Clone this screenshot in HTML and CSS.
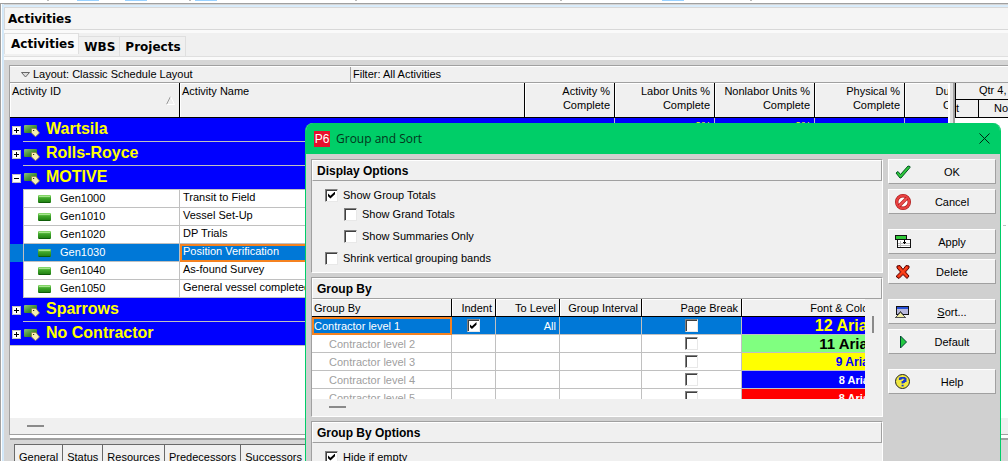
FILE: index.html
```html
<!DOCTYPE html>
<html lang="en">
<head>
<meta charset="utf-8">
<title>Activities - Group and Sort</title>
<link rel="stylesheet" href="styles.css">
</head>
<body>
<svg class="defs" aria-hidden="true">
  <defs>
    <linearGradient id="green" x1="0" y1="0" x2="0" y2="1">
      <stop offset="0" stop-color="#8fdc72"/><stop offset="0.4" stop-color="#3fa62a"/><stop offset="1" stop-color="#1c7a10"/>
    </linearGradient>
    <linearGradient id="moss" x1="0" y1="0" x2="1" y2="1">
      <stop offset="0" stop-color="#8cc47c"/><stop offset="0.5" stop-color="#4a9438"/><stop offset="1" stop-color="#1f5c14"/>
    </linearGradient>
    <symbol id="bar" viewBox="0 0 13 8"><rect width="13" height="8" rx="1" fill="url(#green)"/><path d="M1 1.500h11" stroke="#a5e58c"/><path d="M1 7.500h11" stroke="#0f5c08"/></symbol>
    <symbol id="band" viewBox="0 0 16 12"><rect width="13" height="8" rx="1" fill="url(#moss)"/><path d="M7.500 3.500H12L15.500 8 11.500 11.700 7.500 8z" fill="#f5eeb0" stroke="#8c8448" stroke-width=".8"/><path d="M9 5.500h1.200" stroke="#332"/></symbol>
  </defs>
</svg>
<div class="app">
  <div class="ribbon"><i class="tick t1"></i><i class="hot h1"></i><i class="hot h2"></i><i class="tick t2"></i><i class="hot h3"></i><i class="tick t3"></i><i class="tick t4"></i><i class="hot h4"></i><i class="tick t5"></i></div>
  <main class="frame">
    <h1 class="title">Activities</h1>
    <nav class="tabs"><button class="tab active">Activities</button><button class="tab">WBS</button><button class="tab">Projects</button></nav>
    <section class="workspace">
      <div class="layoutbar">
        <button class="layout"><svg width="9" height="6" viewBox="0 0 9 6"><path d="M.5.500h8L4.500 5z" fill="#ddd" stroke="#666"/></svg>Layout: Classic Schedule Layout</button>
        <div class="filter">Filter: All Activities</div>
      </div>
      <div class="split">
        <div class="gridwrap">
          <table class="grid">
            <colgroup><col class="c-id"><col class="c-name"><col class="c-90"><col class="c-100"><col class="c-100"><col class="c-90"><col class="c-90"></colgroup>
            <thead><tr>
              <th class="left"><div class="sortable">Activity ID<svg width="9" height="9" viewBox="0 0 9 9"><path d="M.5 8.500L4.500.5" stroke="#999" fill="none"/><path d="M4.500.5l4 8H.5" stroke="#fff" fill="none"/></svg></div></th>
              <th class="left">Activity Name</th><th>Activity %<br>Complete</th><th>Labor Units %<br>Complete</th><th>Nonlabor Units %<br>Complete</th><th>Physical %<br>Complete</th><th>Duration %<br>Complete</th>
            </tr></thead>
            <tbody>
              <tr class="group"><td colspan="3"><div class="band"><button class="exp" aria-label="Expand"></button><span><svg width="16" height="12"><use href="#band"/></svg>Wartsila</span></div></td><td class="pct">0%</td><td class="pct">0%</td><td></td><td></td></tr>
              <tr class="group"><td colspan="3"><div class="band"><button class="exp" aria-label="Expand"></button><span><svg width="16" height="12"><use href="#band"/></svg>Rolls-Royce</span></div></td><td></td><td></td><td></td><td></td></tr>
              <tr class="group"><td colspan="3"><div class="band"><button class="exp open" aria-label="Collapse"></button><span><svg width="16" height="12"><use href="#band"/></svg>MOTIVE</span></div></td><td></td><td></td><td></td><td></td></tr>
              <tr class="row"><td><div class="id"><svg width="13" height="8"><use href="#bar"/></svg>Gen1000</div></td><td>Transit to Field</td><td></td><td></td><td></td><td></td><td></td></tr>
              <tr class="row"><td><div class="id"><svg width="13" height="8"><use href="#bar"/></svg>Gen1010</div></td><td>Vessel Set-Up</td><td></td><td></td><td></td><td></td><td></td></tr>
              <tr class="row"><td><div class="id"><svg width="13" height="8"><use href="#bar"/></svg>Gen1020</div></td><td>DP Trials</td><td></td><td></td><td></td><td></td><td></td></tr>
              <tr class="row selected"><td><div class="id"><svg width="13" height="8"><use href="#bar"/></svg>Gen1030</div></td><td class="focus">Position Verification</td><td></td><td></td><td></td><td></td><td></td></tr>
              <tr class="row"><td><div class="id"><svg width="13" height="8"><use href="#bar"/></svg>Gen1040</div></td><td>As-found Survey</td><td></td><td></td><td></td><td></td><td></td></tr>
              <tr class="row"><td><div class="id"><svg width="13" height="8"><use href="#bar"/></svg>Gen1050</div></td><td>General vessel completed</td><td></td><td></td><td></td><td></td><td></td></tr>
              <tr class="group"><td colspan="3"><div class="band"><button class="exp" aria-label="Expand"></button><span><svg width="16" height="12"><use href="#band"/></svg>Sparrows</span></div></td><td></td><td></td><td></td><td></td></tr>
              <tr class="group last"><td colspan="3"><div class="band"><button class="exp" aria-label="Expand"></button><span><svg width="16" height="12"><use href="#band"/></svg>No Contractor</span></div></td><td></td><td></td><td></td><td></td></tr>
            </tbody>
          </table>
          <div class="hscroll"><i></i></div>
        </div>
        <div class="splitter"></div>
        <div class="gantt">
          <div class="quarter">Qtr 4,</div>
          <div class="months"><span>t</span><span>No</span></div>
          <div class="chart"></div>
          <div class="hscroll"></div>
        </div>
      </div>
    </section>
    <nav class="details"><button>General</button><button>Status</button><button>Resources</button><button>Predecessors</button><button>Successors</button></nav>
  </main>
</div>

<div class="dialog" role="dialog" aria-label="Group and Sort">
  <header class="caption"><span class="logo">P6</span><h2>Group and Sort</h2>
    <button class="close" aria-label="Close"><svg width="11" height="11" viewBox="0 0 11 11"><path d="M.5.5l10 10M10.500.5l-10 10" stroke="#021"/></svg></button>
  </header>
  <div class="content">
    <div class="panels">
      <section class="panel">
        <h3>Display Options</h3>
        <div class="checks">
          <label><input type="checkbox" checked>Show Group Totals</label>
          <label class="sub"><input type="checkbox">Show Grand Totals</label>
          <label class="sub spaced"><input type="checkbox">Show Summaries Only</label>
          <label class="spaced"><input type="checkbox">Shrink vertical grouping bands</label>
        </div>
      </section>
      <section class="panel">
        <h3>Group By</h3>
        <div class="levelbox">
          <div class="levelwrap">
            <table class="levels">
              <colgroup><col class="l-name"><col class="l-indent"><col class="l-to"><col class="l-int"><col class="l-page"><col class="l-font"></colgroup>
              <thead><tr><th class="left">Group By</th><th>Indent</th><th>To Level</th><th>Group Interval</th><th>Page Break</th><th>Font &amp; Color</th></tr></thead>
              <tbody>
                <tr class="selected"><td class="focus">Contractor level 1</td><td class="mid"><input type="checkbox" aria-label="Indent" checked></td><td class="right">All</td><td></td><td class="mid"><input type="checkbox" aria-label="Page break, level 1"></td><td class="font f1">12 Arial</td></tr>
                <tr><td class="off">Contractor level 2</td><td></td><td></td><td></td><td class="mid"><input type="checkbox" aria-label="Page break, level 2"></td><td class="font f2">11 Arial</td></tr>
                <tr><td class="off">Contractor level 3</td><td></td><td></td><td></td><td class="mid"><input type="checkbox" aria-label="Page break, level 3"></td><td class="font f3">9 Arial</td></tr>
                <tr><td class="off">Contractor level 4</td><td></td><td></td><td></td><td class="mid"><input type="checkbox" aria-label="Page break, level 4"></td><td class="font f4">8 Arial</td></tr>
                <tr><td class="off">Contractor level 5</td><td></td><td></td><td></td><td class="mid"><input type="checkbox" aria-label="Page break, level 5"></td><td class="font f5">8 Arial</td></tr>
              </tbody>
            </table>
          </div>
          <div class="vscroll"><i></i></div>
        </div>
        <div class="hscroll"><i></i></div>
      </section>
      <section class="panel">
        <h3>Group By Options</h3>
        <div class="checks"><label><input type="checkbox" checked>Hide if empty</label></div>
      </section>
    </div>
    <div class="actions">
      <button><svg width="16" height="16" viewBox="0 0 16 16"><path d="M1 9l2-1.500 2.500 3L13 2l2 .5v1L6 14H5z" fill="#2fc83a" stroke="#052" stroke-width="1"/></svg><span>OK</span></button>
      <button class="end"><svg width="16" height="16" viewBox="0 0 16 16"><circle cx="8" cy="8" r="6.300" fill="#fff" stroke="#a81818" stroke-width="3.400"/><circle cx="8" cy="8" r="6.300" fill="none" stroke="#e84040" stroke-width="2.200"/><path d="M4 12L12 4" stroke="#b81c1c" stroke-width="3.200"/><path d="M4 12L12 4" stroke="#f05050" stroke-width="1.800"/></svg><span>Cancel</span></button>
      <button><svg width="16" height="16" viewBox="0 0 16 16" shape-rendering="crispEdges"><path d="M2.500 5.500h13v8h-13z" fill="#fff" stroke="#111"/><path d="M3 9.500h12M3 11.500h12M5.500 7v6" stroke="#bbb"/><path d="M.5 1.500h11v4H.5z" fill="#30c838" stroke="#111"/><path d="M9.500 6v4M8 8.500h3" stroke="#000"/></svg><span>Apply</span></button>
      <button class="end"><svg width="16" height="16" viewBox="0 0 16 16"><path d="M2 2l3-.5 3 4 3-4 3 .5v2L10.500 8l3.500 4-2 2.500-4-4-4 4L1.500 13v-1L5.500 8 2 4z" fill="#f03010" stroke="#500" stroke-width="1"/><path d="M3.500 3l9 9.500M12 3l-8.500 9.500" stroke="#ff5020"/></svg><span>Delete</span></button>
      <button><svg width="16" height="16" viewBox="0 0 16 16" shape-rendering="crispEdges"><path d="M1.500 2.500h12v8h-12z" fill="#b8b8dc" stroke="#111"/><path d="M2 4h11" stroke="#2850d8" stroke-width="2"/><path d="M.5 13.500h10L5.500 8z" fill="#f0eca0" stroke="#555"/></svg><span><u>S</u>ort...</span></button>
      <button class="end"><svg width="16" height="16" viewBox="0 0 16 16"><path d="M5.500 2v12l6-6z" fill="#22c840" stroke="#043"/></svg><span>Default</span></button>
      <button><svg width="16" height="16" viewBox="0 0 16 16"><circle cx="7.500" cy="7.500" r="7" fill="#f0e840" stroke="#222"/><path d="M4.800 6V4.500h1.400V3.800h3.400v1h1V7H9v1H7.500v1.400" fill="none" stroke="#1838d0" stroke-width="1.800"/><path d="M6.600 10.800h2v1.600h-2z" fill="#1838d0"/></svg><span>Help</span></button>
    </div>
  </div>
</div>
</body>
</html>
```

FILE: styles.css
```css
* { box-sizing: border-box; }
html, body { height: 100%; margin: 0; overflow: hidden; }
body { position: relative; font: 11px/14px "Liberation Sans", Arial, sans-serif; color: #000; background: #fff; }
h1, h2, h3 { margin: 0; }
button { font: inherit; color: inherit; border: 0; padding: 0; background: none; }
svg { flex: none; display: block; }
.defs { position: absolute; width: 0; height: 0; }
.left { text-align: left; }

.app { height: 100%; display: flex; flex-direction: column; }
.ribbon { position: relative; flex: none; height: 3px; }
.ribbon i { position: absolute; top: 0; height: 1px; }
.hot { width: 22px; background: #99d1ff; }
.tick { width: 2px; background: #bbb; }
.h1 { left: 77px; } .h2 { left: 125px; } .h3 { left: 195px; } .h4 { left: 662px; }
.t1 { left: 47px; } .t2 { left: 189px; } .t3 { left: 355px; } .t4 { left: 560px; } .t5 { left: 750px; }

.frame { flex: 1; min-height: 0; display: flex; flex-direction: column; border: solid #a0a0a0; border-width: 1px 0 0 1px; padding: 1px 0 0 1px; background: linear-gradient(90deg, #fff 1px, #cce4f7 1px, #d9ecfb 3px, #d6d6d6 3px); }
.title { flex: none; height: 25px; border-top: 2px solid #d9ecfb; margin-left: 2px; padding-left: 4px; background: #f5f5f5; box-shadow: inset 0 1px #d8d8d8, inset 1px 0 #d8d8d8, inset 0 -1px #d8d8d8; font: bold 12px/24px "DejaVu Sans", Verdana, sans-serif; }
.tabs { flex: none; height: 30px; display: flex; align-items: flex-end; margin-left: 2px; padding-bottom: 3px; background: #f0f0f0; border-top: 3px solid #fafafa; box-shadow: inset 0 -3px #fafafa, inset 0 -4px #dfdfdf; }
.tab { height: 21px; padding: 0 4px 0 5px; border: solid #dfdfdf; border-width: 1px 1px 0 0; font: bold 12px/20px "DejaVu Sans", Verdana, sans-serif; }
.tab.active { align-self: stretch; margin-bottom: -1px; padding: 0 4px 2px 6px; background: #fafafa; border-left-width: 1px; }

.workspace { flex: 1; min-height: 0; display: flex; flex-direction: column; margin: 5px 0 0 7px; border: solid #a0a0a0; border-width: 1px 0 1px 1px; background: #f0f0f0; }
.layoutbar { flex: none; display: flex; height: 17px; border-top: 1px solid #fff; border-bottom: 1px solid #a0a0a0; line-height: 15px; }
.layout { display: flex; align-items: center; gap: 3px; width: 341px; padding-left: 11px; border-right: 1px solid #a0a0a0; }
.filter { padding-left: 2px; }
.split { flex: 1; min-height: 0; display: flex; }
.gridwrap { flex: 1; min-width: 0; display: flex; flex-direction: column; justify-content: space-between; overflow: hidden; background: #fff; }
.grid, .levels { table-layout: fixed; border-collapse: separate; border-spacing: 0; }
.grid { width: 985px; }
.c-id { width: 170px; } .c-name { width: 345px; } .c-90 { width: 90px; } .c-100 { width: 100px; }
.grid th { height: 35px; padding: 1px 4px 0 2px; vertical-align: top; text-align: right; font-weight: normal; background: #f0f0f0; border: solid #000; border-width: 0 1px 1px 0; box-shadow: inset 1px 1px #fff; }
.grid th.left { text-align: left; }
.sortable { display: flex; justify-content: space-between; align-items: flex-start; height: 21px; }
.sortable svg { align-self: flex-end; }
.grid td { padding: 0 0 0 3px; border: solid #c0c0c0; border-width: 0 1px 1px 0; white-space: nowrap; overflow: hidden; }
.group td { height: 24px; background: #00f; color: #ff0; }
.group td:first-child { padding: 0; border-bottom: 0; }
.grid .pct { padding-right: 3px; text-align: right; vertical-align: top; line-height: 16px; }
.band { display: flex; align-items: center; height: 24px; padding-left: 2px; font: bold 16px/22px "Liberation Sans", Arial, sans-serif; }
.band span { flex: 1; display: flex; align-items: center; gap: 6px; height: 24px; margin-left: 2px; padding: 0 0 1px 1px; border-bottom: 1px solid #c0c0c0; }
.band span svg { margin-top: 4px; }
.last .band { border-bottom: 1px solid #c0c0c0; }
.exp { width: 9px; height: 9px; background: linear-gradient(#000, #000) center / 5px 1px no-repeat, linear-gradient(#000, #000) center / 1px 5px no-repeat, #fff; border: 1px solid #c0c0c0; margin-top: 1px; }
.exp.open { background: linear-gradient(#000, #000) center / 5px 1px no-repeat, #fff; }
.row td { height: 18px; padding-bottom: 2px; line-height: 15px; background: #fff; }
.row td:first-child { padding: 0; border-bottom: 0; background: #00f; }
.id { display: flex; align-items: center; gap: 9px; height: 18px; margin-left: 13px; padding: 0 0 1px 14px; background: #fff; border: solid #c0c0c0; border-width: 0 0 1px 1px; }
.id svg { margin-top: 2px; }
.selected td, .selected td:first-child, .selected .id { background: #0078d7; color: #fff; }
.grid .focus { outline: 2px solid #f58220; outline-offset: -2px; }
.hscroll { flex: none; height: 16px; background: #f0f0f0; padding: 7px 17px; }
.hscroll i { display: block; width: 17px; height: 2px; background: #8a8a8a; }
.splitter { width: 7px; border: solid #fff; border-width: 0 0 0 2px; background: linear-gradient(90deg, #e0e0e0 3px, #a0a0a0 3px); }
.gantt { width: 53px; display: flex; flex-direction: column; background: #fff; overflow: hidden; }
.quarter, .months { flex: none; background: #f0f0f0; border: solid #000; border-width: 0 0 1px 1px; white-space: nowrap; }
.quarter { height: 17px; padding-left: 23px; line-height: 15px; }
.months { display: flex; height: 18px; line-height: 17px; }
.months span:first-child { width: 24px; border-right: 1px solid #000; }
.months span + span { padding-left: 15px; }
.chart { flex: 1; background: repeating-linear-gradient(#fff 0 107px, transparent 107px 108px, #fff 108px 203px), linear-gradient(90deg, #fff 48px, #c0c0c0 48px 51px, #fff 51px); }

.details { flex: none; height: 26px; display: flex; align-items: flex-start; margin-left: 8px; padding: 9px 0 0 4px; background: linear-gradient(#fff 3px, #a0a0a0 3px 5px, #d6d6d6 5px); }
.details button { height: 17px; padding: 5px 4px 0; line-height: 14px; background: #f0f0f0; border: solid #696969; border-width: 1px 0 0 1px; }

.dialog { position: absolute; top: 123px; right: 7px; bottom: 0; left: 305px; display: flex; flex-direction: column; overflow: hidden; background: #d0d0d0; border: solid #00ce68; border-width: 0 1px; border-radius: 8px 8px 0 0; }
.caption { flex: none; display: flex; align-items: center; gap: 6px; height: 31px; padding: 0 10px 0 8px; background: #00ce68; }
.logo { width: 16px; height: 16px; background: #e8102c; color: #fff; font: 12px/16px "Liberation Sans", Arial, sans-serif; text-align: center; }
.caption h2 { flex: 1; font: 12px/16px "Open Sans", "Noto Sans", sans-serif; color: #03351c; }
.content { flex: 1; min-height: 0; display: flex; gap: 5px; padding: 5px 4px 0 5px; }
.panels { flex: 1; min-width: 0; display: flex; flex-direction: column; gap: 4px; }
.panel { flex: none; background: #f0f0f0; border: 1px solid; border-color: #a0a0a0 #fff #fff #a0a0a0; }
.panel h3 { height: 21px; padding-left: 4px; border: 1px solid; border-color: #fff #a0a0a0 #a0a0a0 #fff; font: bold 12px/20px "Liberation Sans", Arial, sans-serif; }
.checks { display: flex; flex-direction: column; gap: 5px; padding: 7px 13px; }
.checks label { display: flex; align-items: center; gap: 5px; height: 14px; }
.checks .sub { margin-left: 19px; }
.checks .spaced { margin-top: 3px; }
input[type="checkbox"] { appearance: none; flex: none; display: block; width: 13px; height: 13px; margin: 0; background: #fff; border: 1px solid; border-color: #808080 #e8e8e8 #e8e8e8 #808080; box-shadow: inset 1px 1px #404040; }
input[type="checkbox"]:checked::before { content: ""; display: block; width: 7px; height: 7px; margin: 2px; background: #000; clip-path: polygon(0 28%, 35% 62%, 100% 0, 100% 38%, 35% 100%, 0 68%); }
.levelbox { display: flex; height: 100px; overflow: hidden; }
.levelwrap { flex: 1; min-width: 0; overflow: hidden; }
.levels { width: 564px; }
.l-name { width: 140px; } .l-indent { width: 44px; } .l-to { width: 64px; } .l-int { width: 82px; } .l-page { width: 100px; } .l-font { width: 134px; }
.levels th { height: 18px; padding: 0 3px 0 2px; text-align: right; font-weight: normal; line-height: 16px; border: solid #000; border-width: 0 1px 1px 0; box-shadow: inset 1px 1px #fff; }
.levels th.left { text-align: left; }
.levels td { height: 18px; padding: 0 3px 0 2px; line-height: 16px; background: #fff; border: solid #c0c0c0; border-width: 0 1px 1px 0; white-space: nowrap; }
.levels .selected td { background: #0078d7; }
.levels .focus { outline: 2px solid #f58220; outline-offset: -2px; }
.levels .off { padding-left: 17px; color: #a0a0a0; }
.levels .right, .levels .font { text-align: right; }
.mid input { margin: 0 auto; }
.levels .font { font-weight: bold; }
.levels .selected .f1 { padding-top: 1px; background: #00f; color: #ff0; font-size: 16px; }
.levels .f2 { background: #80ff80; font-size: 15px; }
.levels .f3 { background: #ff0; color: #00f; font-size: 12px; }
.levels .f4 { background: #00f; color: #fff; }
.levels .f5 { background: #f00; color: #fff; }
.vscroll { width: 17px; padding: 17px 7px; }
.vscroll i { display: block; width: 2px; height: 17px; background: #8a8a8a; }
.panel .hscroll { height: 17px; }

.actions { flex: none; width: 108px; display: flex; flex-direction: column; gap: 5px; }
.actions button { display: flex; align-items: center; height: 25px; padding: 0 6px; background: #f0f0f0; border: 1px solid; border-color: #fff #a0a0a0 #a0a0a0 #fff; }
.actions .end { margin-bottom: 10px; }
.actions span { flex: 1; padding-left: 4px; text-align: center; }
```
